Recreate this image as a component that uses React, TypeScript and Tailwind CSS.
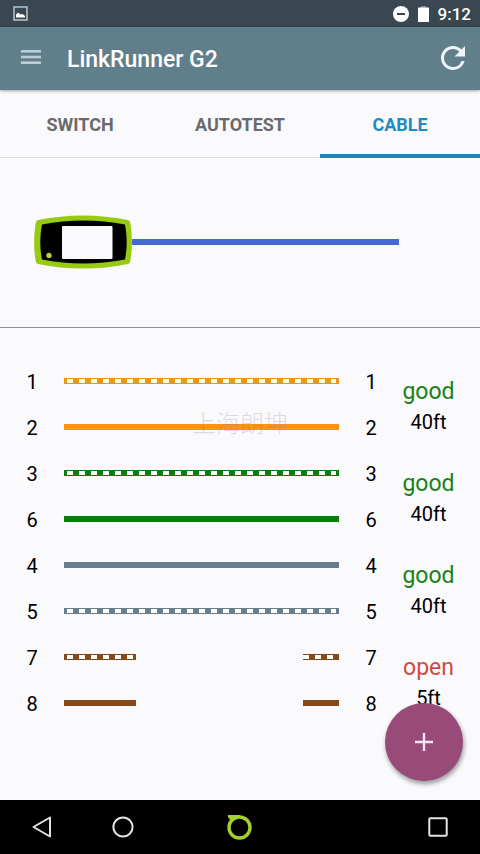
import clsx from "clsx";
import { MdRefresh } from "react-icons/md";

type Wire = {
  pin: number;
  color: string;
  striped?: boolean;
  open?: boolean;
};

type Pair = {
  wires: Wire[];
  status: "good" | "open";
  length: string;
};

const tabs = ["SWITCH", "AUTOTEST", "CABLE"];

const pairs: Pair[] = [
  {
    wires: [
      { pin: 1, color: "bg-[#f29318]", striped: true },
      { pin: 2, color: "bg-[#f79518]" },
    ],
    status: "good",
    length: "40ft",
  },
  {
    wires: [
      { pin: 3, color: "bg-[#0a7d0c]", striped: true },
      { pin: 6, color: "bg-[#057f05]" },
    ],
    status: "good",
    length: "40ft",
  },
  {
    wires: [
      { pin: 4, color: "bg-[#677d8b]" },
      { pin: 5, color: "bg-[#677d8b]", striped: true },
    ],
    status: "good",
    length: "40ft",
  },
  {
    wires: [
      { pin: 7, color: "bg-[#84481a]", striped: true, open: true },
      { pin: 8, color: "bg-[#84481a]", open: true },
    ],
    status: "open",
    length: "5ft",
  },
];

function StatusBar() {
  return (
    <div className="flex h-[27px] items-center justify-between bg-[#394751] pl-[13px] pr-[9px]">
      <svg width="15" height="15" viewBox="0 0 15 15">
        <rect x="1" y="1" width="13" height="13" fill="none" stroke="#c3ccd0" strokeWidth="1.4" />
        <path d="M3 11.5V8.5L5 6.5L7.5 8.5L9.5 8L12 10V11.5Z" fill="#fff" />
      </svg>
      <div className="flex items-center gap-[9px] text-white">
        <svg width="16" height="16" viewBox="0 0 16 16">
          <circle cx="8" cy="8" r="8" fill="#fff" />
          <rect x="4" y="7" width="8" height="2" fill="#394751" />
        </svg>
        <svg width="11" height="16" viewBox="0 0 11 16">
          <rect x="3" y="0" width="5" height="2" fill="#7d8890" />
          <rect x="0" y="1.5" width="11" height="14.5" fill="#fff" />
        </svg>
        <span className="text-[17px] font-medium leading-5">9:12</span>
      </div>
    </div>
  );
}

function Header() {
  return (
    <header className="relative z-10 flex h-[63px] items-center bg-[#617e8b] pl-[21px] pr-[9px] text-white shadow-[0_1px_3px_rgba(0,0,0,0.35)]">
      <button type="button" aria-label="Menu" className="pb-1">
        <svg width="20" height="14" viewBox="0 0 20 14" fill="#bccdda">
          <rect y="0" width="20" height="2.6" />
          <rect y="5.7" width="20" height="2.6" />
          <rect y="11.4" width="20" height="2.6" />
        </svg>
      </button>
      <h1 className="ml-[26px] flex-1 pt-0.5 text-[23px] font-medium leading-7">LinkRunner G2</h1>
      <button type="button" aria-label="Refresh" className="pb-0.5">
        <MdRefresh className="size-9 text-[#eef6fc]" />
      </button>
    </header>
  );
}

function Tabs() {
  return (
    <nav className="flex h-17 border-b border-[#dedee2]">
      {tabs.map((tab) => (
        <button
          key={tab}
          type="button"
          className={clsx(
            "-mb-px flex-1 border-b-4 pt-1.5 text-lg font-bold",
            tab === "CABLE"
              ? "border-[#1f84b8] text-[#1f8bc4]"
              : "border-transparent text-[#6a6a6c]"
          )}
        >
          {tab}
        </button>
      ))}
    </nav>
  );
}

function Device() {
  return (
    <svg width="98" height="54" viewBox="0 0 98 54">
      <path
        d="M4 5Q49 -4 94 5Q96 5.500 96.300 8Q99.500 27 96.300 46Q96 48.500 94 49Q49 58 4 49Q2 48.500 1.700 46Q-1.500 27 1.700 8Q2 5.500 4 5Z"
        fill="#96cb12"
      />
      <path
        d="M8 9.500Q49 1.500 91 9.500Q94.500 27 91 44.500Q49 52.500 8 44.500Q4.500 27 8 9.500Z"
        fill="#000"
      />
      <rect x="28" y="11" width="50.500" height="33" rx="1" fill="#faf9fc" />
      <circle cx="15" cy="40.500" r="2.700" fill="#b5cc45" />
    </svg>
  );
}

function Strand({ wire, className }: { wire: Wire; className: string }) {
  return (
    <div className={clsx("h-1.5 py-px", wire.color, className)}>
      {wire.striped && (
        <div className="h-1 bg-[repeating-linear-gradient(90deg,#fffef4_0_6px,transparent_6px_12px)]" />
      )}
    </div>
  );
}

function WireRow({ wire }: { wire: Wire }) {
  return (
    <div className="flex h-[46px] items-center">
      <span className="w-16 pt-0.5 text-center text-xl">{wire.pin}</span>
      {wire.open ? (
        <div className="flex flex-1 justify-between">
          <Strand wire={wire} className="w-[72px] px-[3px]" />
          <Strand wire={wire} className="w-9" />
        </div>
      ) : (
        <Strand wire={wire} className="flex-1 px-[3px]" />
      )}
      <span className="w-16 pt-0.5 text-center text-xl">{wire.pin}</span>
    </div>
  );
}

export default function App() {
  return (
    <div className="flex min-h-screen flex-col bg-[#faf9fc] font-[Roboto,sans-serif] text-black">
      <StatusBar />
      <Header />
      <Tabs />

      <main className="relative flex-1">
        <section className="flex h-[170px] items-center border-b border-[#8f8f92] pb-0.5 pl-[34px] pr-[81px]">
          <Device />
          <div className="h-1.5 flex-1 bg-[#456bd2]" />
        </section>

        <section className="relative pt-[30px]">
          {pairs.map((pair) => (
            <div key={pair.wires[0].pin} className="flex">
              <div className="flex-1">
                {pair.wires.map((wire) => (
                  <WireRow key={wire.pin} wire={wire} />
                ))}
              </div>
              <div className="flex w-[77px] flex-col items-center justify-center pr-[26px] pt-1.5">
                <span
                  className={clsx(
                    "text-[23px] leading-[30px]",
                    pair.status === "good" ? "text-[#188218]" : "text-[#cf4b40]"
                  )}
                >
                  {pair.status}
                </span>
                <span className="text-xl leading-[30px]">{pair.length}</span>
              </div>
            </div>
          ))}
          <span className="pointer-events-none absolute left-1/2 top-[78px] -translate-x-1/2 whitespace-nowrap font-['Noto_Sans_CJK_SC',sans-serif] text-2xl font-light leading-8 text-[#82788c]/25">
            上海朗坤
          </span>
        </section>

        <button
          type="button"
          aria-label="Add"
          className="absolute bottom-[19px] right-[17px] flex size-[78px] items-center justify-center rounded-full bg-[#984a78] shadow-[1px_3px_5px_rgba(0,0,0,0.4)]"
        >
          <svg width="18" height="18" viewBox="0 0 18 18" fill="none" stroke="#f6e6f2" strokeWidth="2.400">
            <path d="M9 0V18M0 9H18" />
          </svg>
        </button>
      </main>

      <footer className="flex h-[54px] items-center justify-between bg-black px-8">
        <div className="flex items-center gap-[60px]">
          <button type="button" aria-label="Back">
            <svg width="20" height="22" viewBox="0 0 20 22" fill="none" stroke="#e4e4e4" strokeWidth="2" strokeLinejoin="round">
              <path d="M18 1.500V20.500L1.500 11Z" />
            </svg>
          </button>
          <button type="button" aria-label="Home">
            <svg width="22" height="22" viewBox="0 0 22 22" fill="none" stroke="#e4e4e4" strokeWidth="2">
              <circle cx="11" cy="11" r="9.600" />
            </svg>
          </button>
          <button type="button" aria-label="LinkRunner" className="ml-8">
            <svg width="26" height="26" viewBox="0 0 26 26">
              <circle cx="13.500" cy="13.500" r="10.500" fill="none" stroke="#a4cf2f" strokeWidth="3.400" />
              <path d="M2 1H14V4L8 5.500L4.500 9L3.500 4.500L2 3.500Z" fill="#a4cf2f" />
            </svg>
          </button>
        </div>
        <button type="button" aria-label="Recent apps">
          <svg width="20" height="20" viewBox="0 0 20 20" fill="none" stroke="#e4e4e4" strokeWidth="2">
            <rect x="1.300" y="1.300" width="17.400" height="17.400" rx="1" />
          </svg>
        </button>
      </footer>
    </div>
  );
}
